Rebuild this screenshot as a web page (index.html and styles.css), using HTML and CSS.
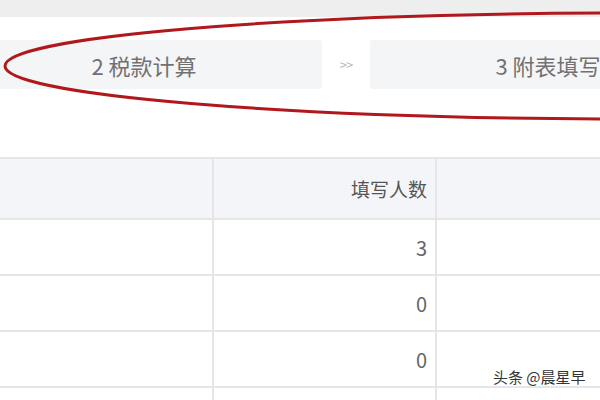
FILE: index.html
```html
<!DOCTYPE html>
<html>
<head>
  <title>个税申报</title>
  <link rel="stylesheet" href="styles.css">
</head>
<body>

  <div class="topbar"></div>

  <div class="steps">
    <div class="step">2 税款计算</div>
    <div class="step-arrow">&gt;&gt;</div>
    <div class="step">3 附表填写</div>
  </div>

  <table class="grid">
    <colgroup>
      <col class="col-a">
      <col class="col-b">
      <col class="col-c">
    </colgroup>
    <thead>
      <tr>
        <th></th>
        <th class="num">填写人数</th>
        <th></th>
      </tr>
    </thead>
    <tbody>
      <tr><td></td><td class="num">3</td><td></td></tr>
      <tr><td></td><td class="num">0</td><td></td></tr>
      <tr><td></td><td class="num">0</td><td></td></tr>
      <tr><td></td><td class="num"></td><td></td></tr>
    </tbody>
  </table>

  <!-- hand-drawn red mark over the steps -->
  <svg class="mark" width="600" height="130" viewBox="0 0 600 130">
    <ellipse cx="640" cy="66" rx="635" ry="53" fill="none" stroke="#b0181c" stroke-width="3"/>
  </svg>

  <div class="watermark">头条 @晨星早</div>

</body>
</html>
```

FILE: styles.css
```css
html {
  overflow: hidden;
}

body {
  font-family: "Noto Sans CJK SC", "Noto Sans", sans-serif;
  margin: 0;
  width: 600px;
  height: 400px;
  overflow: hidden;
  position: relative;
  background-color: #fff;
  color: #666;
}

.topbar {
  height: 17px;
  background-color: #eeeeee;
}

.steps {
  display: flex;
  align-items: center;
  margin: 23px 0 0 -34px;
  width: 760px;
}

.step {
  width: 356px;
  height: 49px;
  flex: none;
  display: flex;
  align-items: center;
  justify-content: center;
  background-color: #f4f5f7;
  border-radius: 3px;
  font-size: 22px;
  color: #717171;
}

.step-arrow {
  width: 48px;
  flex: none;
  text-align: center;
  font-size: 13px;
  color: #b8b8b8;
  letter-spacing: -1px;
}

.grid {
  margin-top: 68px;
  width: 600px;
  border-collapse: collapse;
  table-layout: fixed;
}

.col-a { width: 213px; }
.col-b { width: 223px; }
.col-c { width: 164px; }

.grid th,
.grid td {
  border: 2px solid #e6e6e8;
  padding: 0 8px;
}

.grid th:first-child,
.grid td:first-child {
  border-left: none;
}

.grid th:last-child,
.grid td:last-child {
  border-right: none;
}

.grid th {
  height: 59px;
  background-color: #f4f5f8;
  font-weight: normal;
  font-size: 19px;
  color: #555;
}

.grid td {
  height: 54px;
  font-size: 20px;
  color: #666;
}

.num {
  text-align: right;
}

.mark {
  position: absolute;
  top: 0;
  left: 0;
  pointer-events: none;
}

.watermark {
  position: absolute;
  left: 493px;
  top: 366px;
  font-size: 15px;
  color: #333;
  text-shadow: 0 0 2px #fff, 0 0 2px #fff;
}
```
